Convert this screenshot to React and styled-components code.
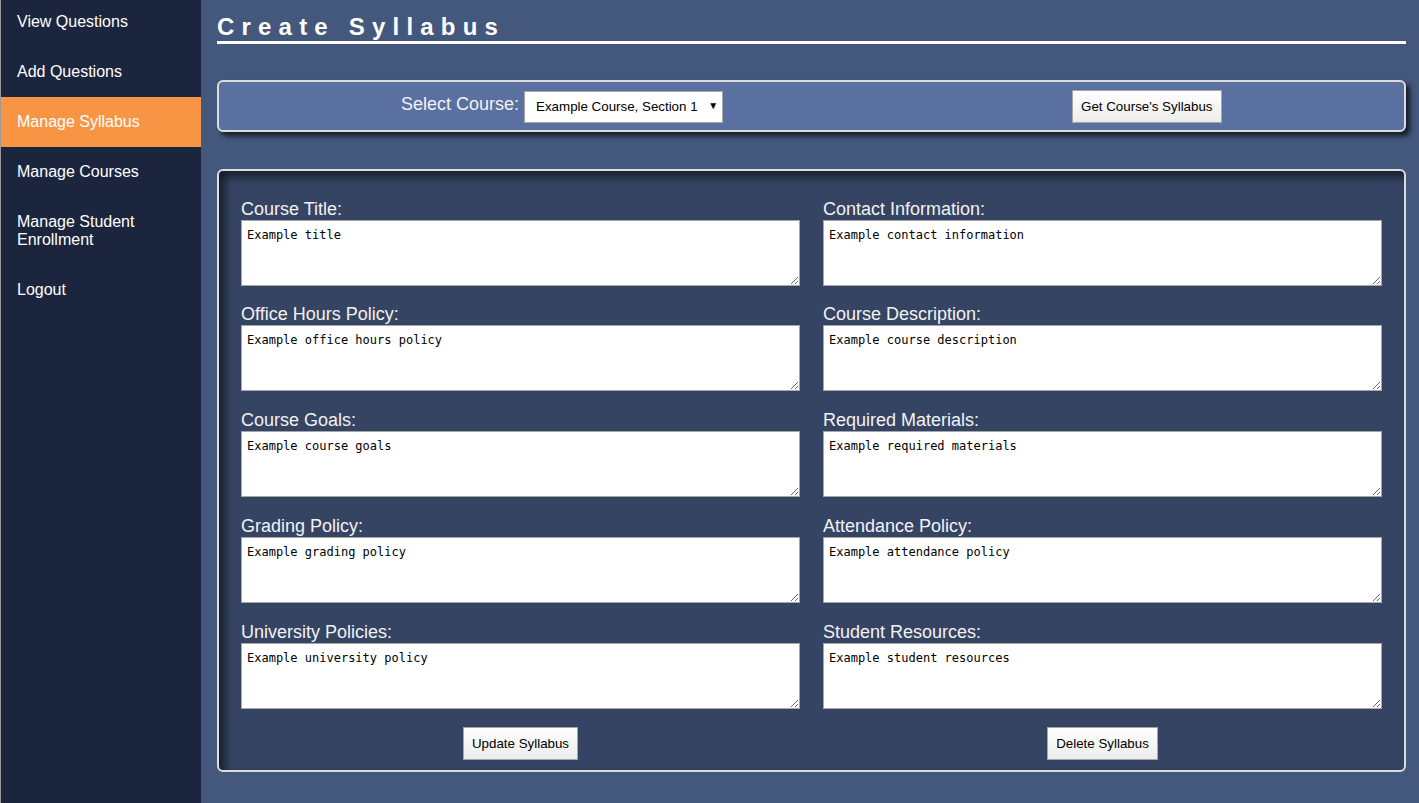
import styled, { createGlobalStyle } from "styled-components";

const GlobalStyle = createGlobalStyle`
  html, body {
    margin: 0;
    padding: 0;
    background: #44577d;
    font-family: "Liberation Sans", Arial, sans-serif;
  }
  * {
    box-sizing: border-box;
  }
`;

const Page = styled.div`
  display: flex;
  min-height: 100vh;
  overflow: hidden;
`;

const Sidebar = styled.nav`
  width: 201px;
  flex-shrink: 0;
  background: #1b263e;
  border-left: 1px solid #9a9a9a;
`;

const NavList = styled.ul`
  list-style: none;
  margin: -3px 0 0;
  padding: 0;
`;

const NavItem = styled.li`
  padding: 16px 32px 16px 16px;
  font-size: 16px;
  line-height: 18px;
  color: #ffffff;
  background: ${(p) => (p.$active ? "#f79545" : "transparent")};
  cursor: pointer;
`;

const Main = styled.main`
  flex: 1;
  padding: 13px 13px 31px 16px;
  display: flex;
  flex-direction: column;
`;

const Title = styled.h1`
  margin: 0;
  font-size: 24px;
  font-weight: bold;
  letter-spacing: 7.2px;
  color: #ffffff;
  line-height: 27.5px;
  border-bottom: 3px solid #ffffff;
`;

const CoursePanel = styled.div`
  margin-top: 36px;
  height: 52px;
  display: flex;
  align-items: center;
  padding-left: 182px;
  background: #5a70a1;
  border: 2px solid #dcdcdc;
  border-radius: 6px;
  box-shadow: 4px 4px 5px #161c2a;
`;

const PanelLabel = styled.label`
  font-size: 18px;
  color: #f2f2f2;
  margin-right: 5px;
  margin-top: -3px;
`;

const SelectWrap = styled.div`
  position: relative;
  width: 199px;
  height: 32px;
  margin-top: 2px;
`;

const CourseSelect = styled.select`
  appearance: none;
  width: 100%;
  height: 100%;
  padding: 0 20px 0 11px;
  border: 1px solid #a6a6a6;
  background: #ffffff;
  font-family: "Liberation Sans", Arial, sans-serif;
  font-size: 13.333px;
  color: #000;
`;

const SelectArrow = styled.span`
  position: absolute;
  right: 5px;
  top: 9px;
  font-size: 10px;
  color: #000;
  pointer-events: none;
`;

const Button = styled.button`
  height: 33px;
  padding: 0 8px;
  border: 1px solid #a6a6a6;
  background: linear-gradient(#ffffff, #ececec);
  font-family: "Liberation Sans", Arial, sans-serif;
  font-size: 13.333px;
  color: #000;
  cursor: pointer;
`;

const FetchButton = styled(Button)`
  margin-left: 349px;
  margin-top: 2px;
`;

const FormPanel = styled.form`
  margin-top: 37px;
  background: #354463;
  border: 2px solid #dcdcdc;
  border-radius: 6px;
  box-shadow: inset 6px 6px 9px rgba(0, 0, 0, 0.55);
  padding: 28px 22px 10px;
  display: grid;
  grid-template-columns: 1fr 1fr;
  column-gap: 23px;
  row-gap: 18.75px;
`;

const Field = styled.div`
  display: flex;
  flex-direction: column;
`;

const FieldLabel = styled.label`
  font-size: 18px;
  line-height: 21px;
  color: #f2f2f2;
`;

const TextArea = styled.textarea`
  display: block;
  width: 100%;
  height: 66px;
  padding: 7px 5px 5px;
  border: 1px solid #a6a6a6;
  background: #ffffff;
  font-family: "DejaVu Sans Mono", monospace;
  font-size: 12px;
  line-height: 15px;
  color: #000;
  resize: both;
`;

const Actions = styled.div`
  display: flex;
  justify-content: center;
`;

const fields = [
  ["Course Title:", "Example title"],
  ["Contact Information:", "Example contact information"],
  ["Office Hours Policy:", "Example office hours policy"],
  ["Course Description:", "Example course description"],
  ["Course Goals:", "Example course goals"],
  ["Required Materials:", "Example required materials"],
  ["Grading Policy:", "Example grading policy"],
  ["Attendance Policy:", "Example attendance policy"],
  ["University Policies:", "Example university policy"],
  ["Student Resources:", "Example student resources"],
];

const navItems = [
  "View Questions",
  "Add Questions",
  "Manage Syllabus",
  "Manage Courses",
  "Manage Student Enrollment",
  "Logout",
];

export default function App() {
  return (
    <>
      <GlobalStyle />
      <Page>
        <Sidebar>
          <NavList>
            {navItems.map((item) => (
              <NavItem key={item} $active={item === "Manage Syllabus"}>
                {item}
              </NavItem>
            ))}
          </NavList>
        </Sidebar>
        <Main>
          <Title>Create Syllabus</Title>
          <CoursePanel>
            <PanelLabel htmlFor="course">Select Course:</PanelLabel>
            <SelectWrap>
              <CourseSelect id="course" defaultValue="1">
                <option value="1">Example Course, Section 1</option>
              </CourseSelect>
              <SelectArrow>▼</SelectArrow>
            </SelectWrap>
            <FetchButton type="button">Get Course's Syllabus</FetchButton>
          </CoursePanel>
          <FormPanel onSubmit={(e) => e.preventDefault()}>
            {fields.map(([label, value]) => (
              <Field key={label}>
                <FieldLabel>{label}</FieldLabel>
                <TextArea defaultValue={value} />
              </Field>
            ))}
            <Actions>
              <Button type="button">Update Syllabus</Button>
            </Actions>
            <Actions>
              <Button type="button">Delete Syllabus</Button>
            </Actions>
          </FormPanel>
        </Main>
      </Page>
    </>
  );
}
